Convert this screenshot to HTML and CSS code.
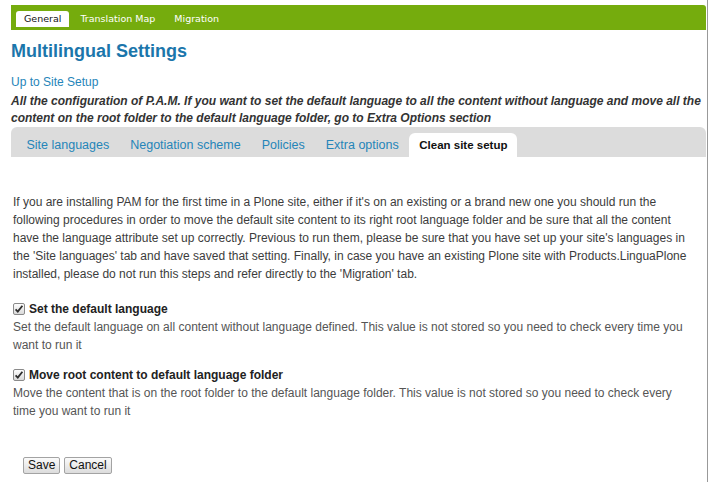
FILE: index.html
```html
<!DOCTYPE html>
<html lang="en">
<head>
    <meta charset="UTF-8">
    <title>Multilingual Settings</title>
    <link rel="stylesheet" href="styles.css">
</head>
<body>
    <div class="page">
        <div class="topnav">
            <a class="active" href="#">General</a>
            <a href="#">Translation Map</a>
            <a href="#">Migration</a>
        </div>

        <h1>Multilingual Settings</h1>
        <a class="up-link" href="#">Up to Site Setup</a>
        <p class="lead">All the configuration of P.A.M. If you want to set the default language to all the content without language and move all the content on the root folder to the default language folder, go to Extra Options section</p>

        <div class="tabs">
            <a href="#">Site languages</a>
            <a href="#">Negotiation scheme</a>
            <a href="#">Policies</a>
            <a href="#">Extra options</a>
            <a class="active" href="#">Clean site setup</a>
        </div>

        <form class="setup-form">
            <p class="intro">If you are installing PAM for the first time in a Plone site, either if it's on an existing or a brand new one you should run the<br>
            following procedures in order to move the default site content to its right root language folder and be sure that all the content<br>
            have the language attribute set up correctly. Previous to run them, please be sure that you have set up your site's languages in<br>
            the 'Site languages' tab and have saved that setting. Finally, in case you have an existing Plone site with Products.LinguaPlone<br>
            installed, please do not run this steps and refer directly to the 'Migration' tab.</p>

            <div class="field">
                <label>
                    <svg class="check" width="12" height="12" viewBox="0 0 12 12">
                        <defs>
                            <linearGradient id="cb" x1="0" y1="0" x2="0" y2="1">
                                <stop offset="0" stop-color="#ffffff"/>
                                <stop offset="1" stop-color="#d8d8d8"/>
                            </linearGradient>
                        </defs>
                        <rect x="0.5" y="0.5" width="11" height="11" rx="1.5" fill="url(#cb)" stroke="#8a8a8a"/>
                        <path d="M2.6 6.3 L4.8 8.6 L9.4 2.8" fill="none" stroke="#2e2e2e" stroke-width="1.8"/>
                    </svg>
                    Set the default language
                </label>
                <div class="help">Set the default language on all content without language defined. This value is not stored so you need to check every time you<br>
                want to run it</div>
            </div>

            <div class="field">
                <label>
                    <svg class="check" width="12" height="12" viewBox="0 0 12 12">
                        <rect x="0.5" y="0.5" width="11" height="11" rx="1.5" fill="url(#cb)" stroke="#8a8a8a"/>
                        <path d="M2.6 6.3 L4.8 8.6 L9.4 2.8" fill="none" stroke="#2e2e2e" stroke-width="1.8"/>
                    </svg>
                    Move root content to default language folder
                </label>
                <div class="help">Move the content that is on the root folder to the default language folder. This value is not stored so you need to check every<br>
                time you want to run it</div>
            </div>

            <div class="actions">
                <button type="submit">Save</button>
                <button type="button">Cancel</button>
            </div>
        </form>
    </div>
</body>
</html>
```

FILE: styles.css
```css
body {
    margin: 0;
    font-family: "Liberation Sans", Arial, sans-serif;
    font-size: 12px;
    color: #444;
    background: white;
}
a {
    text-decoration: none;
}
.page {
    box-sizing: border-box;
    width: 708px;
    min-height: 100vh;
    padding: 5px 1px 0 11px;
    border-right: 1px solid #999;
}
.topnav {
    display: flex;
    gap: 3px;
    height: 25px;
    padding: 6px 0 0 5px;
    box-sizing: border-box;
    background-color: #75ac0d;
    border-top-right-radius: 3px;
}
.topnav a {
    height: 16px;
    line-height: 16px;
    padding: 0 8px;
    font-family: "DejaVu Sans", Verdana, sans-serif;
    font-size: 9.5px;
    color: white;
}
.topnav a.active {
    background: white;
    color: #111;
    border-radius: 3px 3px 0 0;
}
h1 {
    margin: 10px 0 0;
    font-size: 18px;
    line-height: 22px;
    color: #1b76ab;
}
.up-link {
    display: block;
    margin-top: 11px;
    line-height: 18px;
    color: #2585b9;
}
.lead {
    margin: 1.5px 0 0;
    font-weight: bold;
    font-style: italic;
    line-height: 17px;
    color: #333;
}
.tabs {
    display: flex;
    align-items: flex-end;
    height: 30px;
    padding-left: 5px;
    background-color: #dcdcdc;
    border-radius: 6px 6px 0 0;
}
.tabs a {
    height: 24px;
    line-height: 24px;
    padding: 0 10.5px;
    font-size: 12.5px;
    color: #2585b9;
}
.tabs a.active {
    padding: 0 10px;
    background: white;
    color: #111;
    font-weight: bold;
    font-size: 11.5px;
    border-radius: 6px 6px 0 0;
}
.setup-form {
    padding: 36px 4px 0 2px;
}
.intro {
    margin: 0;
    line-height: 18px;
    color: #3c3c3c;
}
.field {
    margin-top: 18px;
}
.field + .field {
    margin-top: 13px;
}
.field label {
    display: flex;
    align-items: center;
    gap: 4px;
    line-height: 17px;
    font-weight: bold;
    color: #222;
}
.help {
    line-height: 18px;
    color: #555;
}
.actions {
    display: flex;
    gap: 4px;
    margin: 37px 0 0 10px;
}
button {
    height: 17px;
    padding: 0 4px;
    font-family: "Liberation Sans", Arial, sans-serif;
    font-size: 12px;
    color: #111;
    background: linear-gradient(#fbfbfb, #dcdcdc);
    border: 1px solid #a3a3a3;
    border-radius: 2px;
}
```
